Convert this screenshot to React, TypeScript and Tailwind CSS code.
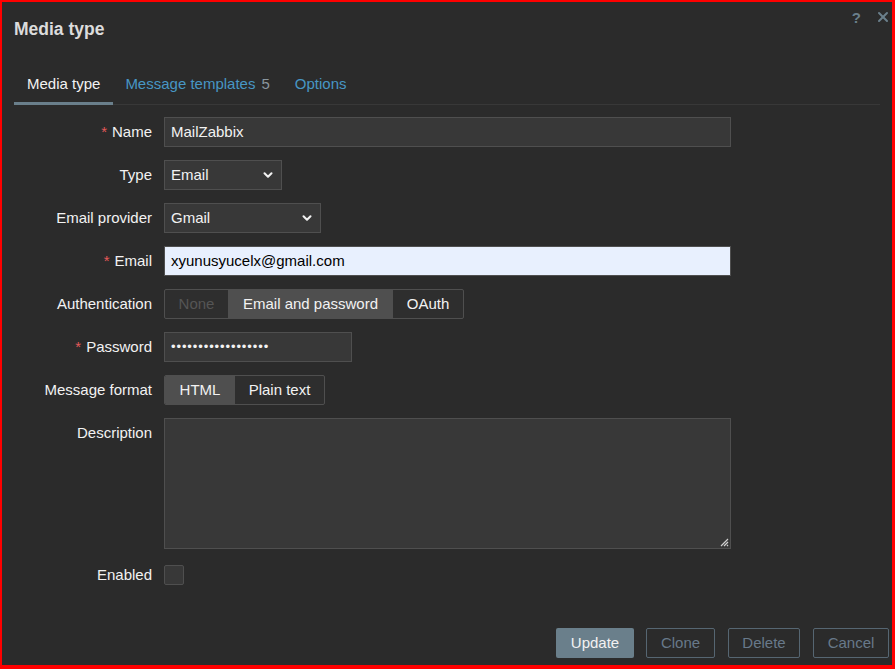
import { ChevronDown, X } from 'lucide-react';

const inputBox = 'h-[30px] bg-[#383838] border border-[#4f4f4f] px-[6px] flex items-center text-[#f2f2f2]';

function Row({ label, required, children, top = false }: { label: string; required?: boolean; children: React.ReactNode; top?: boolean }) {
  return (
    <div className={`flex ${top ? 'items-start' : 'items-center'}`}>
      <div className="w-[150px] text-right leading-[30px] text-[#f2f2f2]">
        {required && <span className="text-[#e45959] mr-[5px]">*</span>}
        {label}
      </div>
      <div className="ml-[12px]">{children}</div>
    </div>
  );
}

function Select({ value, width }: { value: string; width: string }) {
  return (
    <div className={`${inputBox} ${width} justify-between pr-[6px]`}>
      <span>{value}</span>
      <ChevronDown className="w-[14px] h-[14px] text-[#f2f2f2]" strokeWidth={3.5} />
    </div>
  );
}

export default function App() {
  return (
    <div
      className="relative w-[895px] h-[669px] bg-[#2b2b2b] border-t-2 border-l-2 border-r-[3px] border-b-4 border-[#ff0000] flex flex-col text-[15px]"
      style={{ fontFamily: '"Liberation Sans", Arial, sans-serif' }}
    >
      {/* header */}
      <div className="h-[54px] flex items-center px-[12px]">
        <h1 className="text-[17.5px] font-bold text-[#dcdcdc]">Media type</h1>
      </div>
      <div className="absolute top-[7px] right-[1px] flex items-center gap-[14px] text-[#6a7f8b] leading-none">
        <span className="text-[15px] font-bold">?</span>
        <X className="w-[16px] h-[16px]" strokeWidth={3} />
      </div>

      {/* tabs */}
      <div className="mt-[11px] mx-[12px] flex border-b border-[#383838]">
        <div className="h-[38px] px-[13px] flex items-center border-b-[3px] border-[#6a7f8b] text-[#f2f2f2] -mb-px">Media type</div>
        <div className="h-[38px] px-[12px] flex items-center border-b-[3px] border-transparent text-[#4796c4] -mb-px">
          Message templates<span className="ml-[6px] text-[#8a969e]">5</span>
        </div>
        <div className="h-[38px] px-[13px] flex items-center border-b-[3px] border-transparent text-[#4796c4] -mb-px">Options</div>
      </div>

      {/* form */}
      <div className="mt-[12px] flex flex-col gap-[13px]">
        <Row label="Name" required>
          <div className={`${inputBox} w-[567px]`}>MailZabbix</div>
        </Row>
        <Row label="Type">
          <Select value="Email" width="w-[118px]" />
        </Row>
        <Row label="Email provider">
          <Select value="Gmail" width="w-[157px]" />
        </Row>
        <Row label="Email" required>
          <div className="h-[30px] w-[567px] bg-[#e8f0fe] border border-[#4f4f4f] px-[6px] flex items-center text-black">xyunusyucelx@gmail.com</div>
        </Row>
        <Row label="Authentication">
          <div className="h-[30px] flex border border-[#4f4f4f] rounded-[2px] overflow-hidden bg-[#2e2e2e]">
            <div className="w-[63px] flex items-center justify-center text-[#555555]">None</div>
            <div className="w-[165px] flex items-center justify-center bg-[#4f4f4f] text-[#f2f2f2]">Email and password</div>
            <div className="w-[70px] flex items-center justify-center text-[#f2f2f2]">OAuth</div>
          </div>
        </Row>
        <Row label="Password" required>
          <div className={`${inputBox} w-[188px]`}>
            <span className="text-[13px] tracking-[0.9px]">{'•'.repeat(18)}</span>
          </div>
        </Row>
        <Row label="Message format">
          <div className="h-[30px] flex border border-[#4f4f4f] rounded-[2px] overflow-hidden bg-[#2e2e2e]">
            <div className="w-[70px] flex items-center justify-center bg-[#4f4f4f] text-[#f2f2f2]">HTML</div>
            <div className="w-[89px] flex items-center justify-center text-[#f2f2f2]">Plain text</div>
          </div>
        </Row>
        <Row label="Description" top>
          <div className="relative w-[567px] h-[131px] bg-[#383838] border border-[#4f4f4f]">
            <svg className="absolute right-[1px] bottom-[1px]" width="9" height="9" viewBox="0 0 9 9">
              <path d="M8 1 L1 8 M8 4 L4 8 M8 7 L7 8" stroke="#d0d0d0" strokeWidth="1.2" />
            </svg>
          </div>
        </Row>
        <div className="flex items-center mt-[2px]">
          <div className="w-[150px] text-right text-[#f2f2f2]">Enabled</div>
          <div className="ml-[12px] w-[20px] h-[20px] bg-[#383838] border border-[#4f4f4f] rounded-[2px]" />
        </div>
      </div>

      {/* footer */}
      <div className="mt-auto pb-[7px] pr-[3px] flex justify-end">
        <button className="w-[78px] h-[30px] rounded-[2px] bg-[#6a7f8b] text-[#f2f2f2]">Update</button>
        <button className="ml-[12px] w-[69px] h-[30px] rounded-[2px] border border-[#566672] text-[#68798a]">Clone</button>
        <button className="ml-[13px] w-[72px] h-[30px] rounded-[2px] border border-[#566672] text-[#68798a]">Delete</button>
        <button className="ml-[13px] w-[76px] h-[30px] rounded-[2px] border border-[#566672] text-[#68798a]">Cancel</button>
      </div>
    </div>
  );
}
